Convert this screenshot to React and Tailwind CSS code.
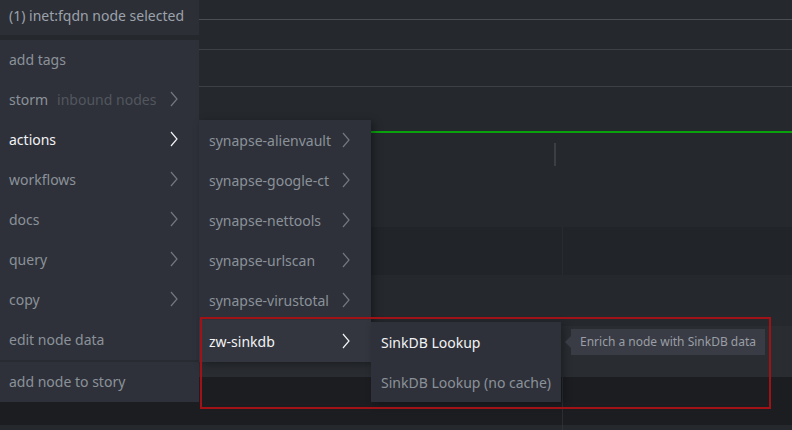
const MENU = [
  { label: 'add tags' },
  { label: 'storm', hint: 'inbound nodes', sub: true },
  { label: 'actions', sub: true, active: true },
  { label: 'workflows', sub: true },
  { label: 'docs', sub: true },
  { label: 'query', sub: true },
  { label: 'copy', sub: true },
  { label: 'edit node data' },
]

const ACTIONS = [
  'synapse-alienvault',
  'synapse-google-ct',
  'synapse-nettools',
  'synapse-urlscan',
  'synapse-virustotal',
]

function Chevron({ active }) {
  return (
    <svg width="8" height="16" viewBox="0 0 8 16" className="shrink-0">
      <path
        d="M1 1 L7 8 L1 15"
        fill="none"
        stroke={active ? '#f2f3f5' : '#727780'}
        strokeWidth="1.2"
      />
    </svg>
  )
}

export default function App() {
  return (
    <div className="relative h-[430px] w-[792px] overflow-hidden bg-[#25282d] font-['Noto_Sans',sans-serif] text-[14px]">
      {/* fondo */}
      <div className="flex flex-col">
        <div className="h-[19px]" />
        <div className="h-px bg-[#4b4e53]" />
        <div className="h-[29px]" />
        <div className="h-px bg-[#3d4045]" />
        <div className="h-[36px]" />
        <div className="h-px bg-[#3d4045]" />
        <div className="h-[44px]" />
        <div className="h-[2px] bg-[#0aa20c]" />
        <div className="h-[94px] pl-[554px] pt-[10px]">
          <div className="h-[23px] w-[2px] bg-[#3b3e44]" />
        </div>
        <div className="flex h-[48px] bg-[#212429]">
          <div className="w-[562px]" />
          <div className="w-px bg-[#282b30]" />
        </div>
        <div className="h-[51px]" />
        <div className="h-[51px] bg-[#292c31]" />
        <div className="flex h-[48px] bg-[#1b1d21]">
          <div className="w-[562px]" />
          <div className="w-px bg-[#2a2d32]" />
        </div>
        <div className="flex h-[5px]">
          <div className="w-[562px]" />
          <div className="w-px bg-[#2e3136]" />
        </div>
      </div>

      {/* menú principal */}
      <div className="absolute left-0 top-0 w-[199px]">
        <div className="h-[35px] bg-[#2c2f36] pl-[9px] leading-[31px] text-[#9ca2ab]">
          (1) inet:fqdn node selected
        </div>
        <div className="mt-[5px] bg-[#2e3139]">
          {MENU.map((item) => (
            <div
              key={item.label}
              className="flex h-[40px] items-center justify-between pb-[2px] pl-[9px] pr-[21px]"
            >
              <span className={item.active ? 'text-[#f2f3f5]' : 'text-[#8b919a]'}>
                {item.label}
                {item.hint && (
                  <span className="ml-[9px] text-[#52575f]">{item.hint}</span>
                )}
              </span>
              {item.sub && <Chevron active={item.active} />}
            </div>
          ))}
          <div className="h-[2px] bg-[#282b31]" />
          <div className="flex h-[40px] items-center pb-[2px] pl-[9px] text-[#8b919a]">
            add node to story
          </div>
        </div>
      </div>

      {/* submenú acciones */}
      <div className="absolute left-[199px] top-[120px] w-[172px] bg-[#2e3139] shadow-[3px_2px_8px_rgba(0,0,0,0.35)]">
        {ACTIONS.map((a) => (
          <div
            key={a}
            className="flex h-[40px] items-center justify-between pl-[10px] pr-[21px] text-[#8b919a]"
          >
            <span>{a}</span>
            <Chevron />
          </div>
        ))}
        <div className="flex h-[42px] items-center justify-between bg-[#33363e] pl-[10px] pr-[21px] text-[#f2f3f5]">
          <span>zw-sinkdb</span>
          <Chevron active />
        </div>
      </div>

      {/* submenú sinkdb */}
      <div className="absolute left-[371px] top-[322px] w-[190px] bg-[#2e3139] shadow-[3px_2px_8px_rgba(0,0,0,0.3)]">
        <div className="flex h-[40px] items-center pl-[10px] text-[#f2f3f5]">SinkDB Lookup</div>
        <div className="flex h-[40px] items-center pl-[10px] text-[#8b919a]">
          SinkDB Lookup (no cache)
        </div>
      </div>

      {/* tooltip */}
      <div className="absolute left-[571px] top-[329px] flex h-[26px] w-[194px] items-center bg-[#393c44] pl-[9px] text-[12px] text-[#9a9ea6]">
        <div className="absolute left-[-6px] top-[7px] h-0 w-0 border-y-[6px] border-r-[6px] border-y-transparent border-r-[#393c44]" />
        Enrich a node with SinkDB data
      </div>

      {/* recuadro rojo */}
      <div className="absolute left-[200px] top-[317px] h-[92px] w-[571px] border-2 border-[#a01216]" />
    </div>
  )
}
